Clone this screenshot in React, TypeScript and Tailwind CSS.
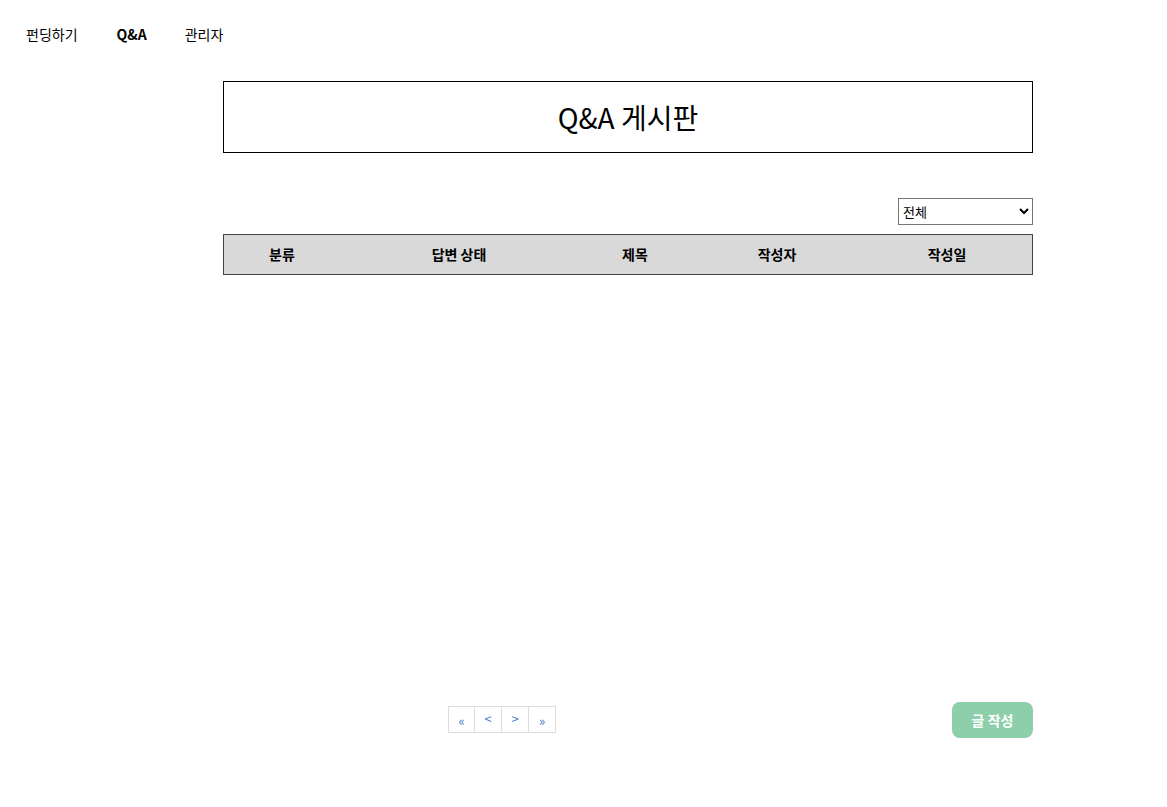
import React from "react";

export default function App() {
  const font = { fontFamily: '"Noto Sans CJK KR", "Noto Sans", sans-serif' };
  return (
    <div className="w-[1167px] min-h-[807px] bg-white text-black" style={font}>
      <nav className="flex items-center h-[68px] pl-[26px] text-[14px]">
        <span className="mr-[39px]">펀딩하기</span>
        <span className="mr-[38px] font-bold">Q&amp;A</span>
        <span>관리자</span>
      </nav>
      <div className="ml-[223px] w-[810px] pt-[13px]">
        <div className="h-[72px] border border-black flex items-center justify-center text-[28px]">
          Q&amp;A 게시판
        </div>
        <div className="flex justify-end mt-[45px]">
          <select className="w-[135px] h-[27px] border border-[#767676] text-[13px] px-0 bg-white" defaultValue="전체">
            <option>전체</option>
          </select>
        </div>
        <div className="mt-[9px] h-[41px] border border-[#444] bg-[#d9d9d9] flex items-center text-[14px] font-bold">
          <div className="w-[116px] text-center">분류</div>
          <div className="w-[238px] text-center">답변 상태</div>
          <div className="w-[114px] text-center">제목</div>
          <div className="w-[170px] text-center">작성자</div>
          <div className="flex-1 text-center">작성일</div>
        </div>
        <div className="h-[427px]" />
        <div className="flex items-center">
          <div className="flex ml-[225px] -mt-[2px] text-[#4a7bc8] text-[13px]">
            <span className="w-[27px] h-[27px] border border-[#ddd] flex items-center justify-center pt-[4px]">«</span>
            <span className="w-[27px] h-[27px] border border-l-0 border-[#ddd] flex items-center justify-center">&lt;</span>
            <span className="w-[27px] h-[27px] border border-l-0 border-[#ddd] flex items-center justify-center">&gt;</span>
            <span className="w-[27px] h-[27px] border border-l-0 border-[#ddd] flex items-center justify-center pt-[4px]">»</span>
          </div>
          <div className="flex-1" />
          <button className="w-[81px] h-[36px] rounded-[8px] bg-[#8ccfaa] text-white text-[14px] font-semibold">글 작성</button>
        </div>
      </div>
    </div>
  );
}
